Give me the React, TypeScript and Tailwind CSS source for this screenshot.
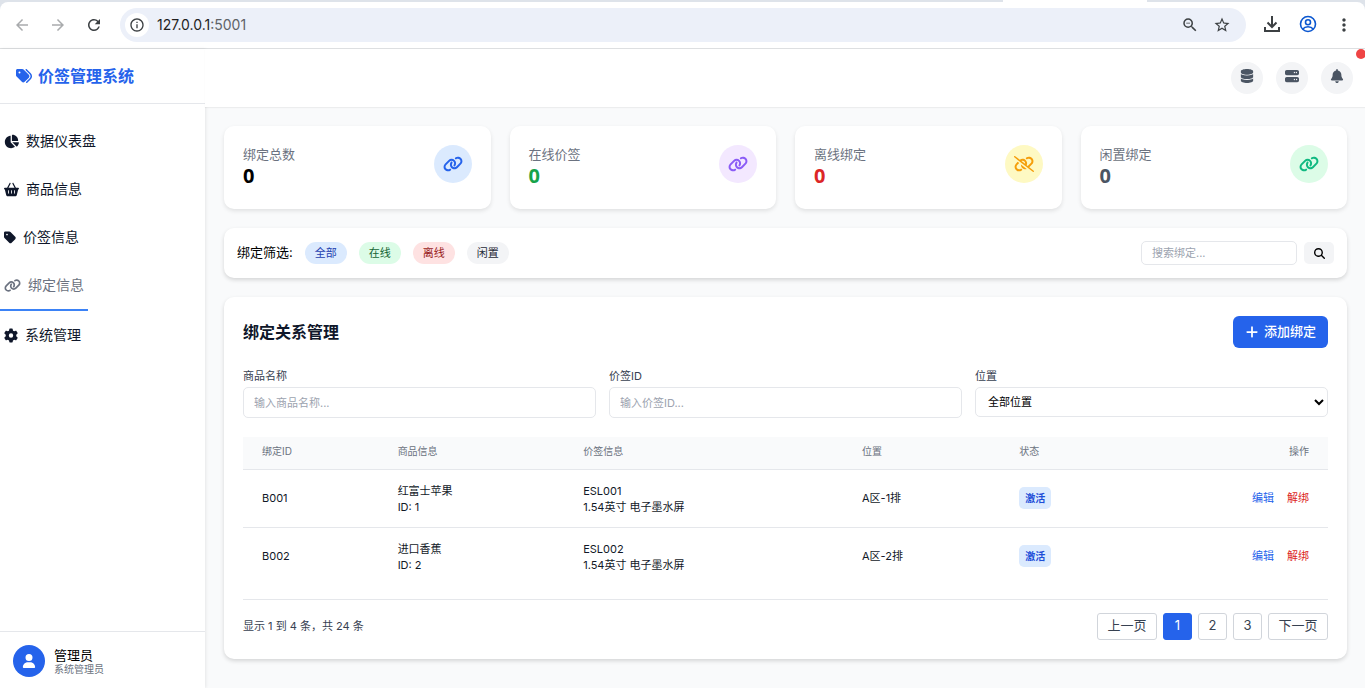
import { useState } from "react";
import type { ReactNode } from "react";
import {
  FaBasketShopping,
  FaBell,
  FaChartPie,
  FaDatabase,
  FaGear,
  FaLink,
  FaLinkSlash,
  FaMagnifyingGlass,
  FaPlus,
  FaServer,
  FaTag,
  FaTags,
  FaUser,
} from "react-icons/fa6";
import { MdArrowBack, MdArrowForward, MdInfoOutline, MdMoreVert, MdRefresh, MdStarBorder, MdZoomOut } from "react-icons/md";
import { clsx } from "clsx";

type Binding = {
  id: string;
  product: string;
  productId: number;
  tag: string;
  tagModel: string;
  location: string;
};

type StatCardProps = {
  label: string;
  value: number;
  valueClass: string;
  iconClass: string;
  icon: ReactNode;
};

const navItems = [
  { label: "数据仪表盘", icon: FaChartPie, iconWidth: "w-[15px]" },
  { label: "商品信息", icon: FaBasketShopping, iconWidth: "w-[15px]" },
  { label: "价签信息", icon: FaTag, iconWidth: "w-3" },
  { label: "绑定信息", icon: FaLink, iconWidth: "w-[17px]" },
  { label: "系统管理", icon: FaGear, iconWidth: "w-[14px]" },
];

const filters = [
  { label: "全部", className: "bg-[#dbeafe] text-[#1e40af]" },
  { label: "在线", className: "bg-[#dcfce7] text-[#166534]" },
  { label: "离线", className: "bg-[#fee2e2] text-[#991b1b]" },
  { label: "闲置", className: "bg-[#f3f4f6] text-[#1f2937]" },
];

const bindings: Binding[] = [
  { id: "B001", product: "红富士苹果", productId: 1, tag: "ESL001", tagModel: "1.54英寸 电子墨水屏", location: "A区-1排" },
  { id: "B002", product: "进口香蕉", productId: 2, tag: "ESL002", tagModel: "1.54英寸 电子墨水屏", location: "A区-2排" },
];

const inputClass = "w-full rounded-[5px] border border-[#e5e7eb] bg-white px-[10px] text-[11px] placeholder:text-[#9ca3af]";

const BrowserBar = () => (
  <div className="border-b border-[#dddfe1] bg-[#dee3ea]">
    <div className="flex h-0.5">
      <div className="w-[1003px]"></div>
      <div className="w-36 bg-white"></div>
    </div>
    <div className="flex h-[46px] items-center rounded-t-lg bg-white pl-3 pr-[11px] text-[#3c4043]">
      <button aria-label="后退" className="mr-4 flex w-5 justify-center text-[#a9abad]">
        <MdArrowBack size={18} />
      </button>
      <button aria-label="前进" className="mr-4 flex w-5 justify-center text-[#a9abad]">
        <MdArrowForward size={18} />
      </button>
      <button aria-label="刷新" className="mr-4 flex w-5 justify-center">
        <MdRefresh size={18} />
      </button>
      <div className="flex h-[34px] flex-1 items-center rounded-full bg-[#ecf0f9] pl-[5px] pr-[14px]">
        <button aria-label="网站信息" className="flex h-6 w-6 items-center justify-center rounded-full bg-white">
          <MdInfoOutline size={16} />
        </button>
        <span className="ml-2 flex-1 text-sm text-[#5f6368]">
          <span className="text-[#1f1f1f]">127.0.0.1</span>:5001
        </span>
        <button aria-label="缩放" className="mr-3 flex w-5 justify-center">
          <MdZoomOut size={18} />
        </button>
        <button aria-label="收藏" className="flex w-5 justify-center">
          <MdStarBorder size={18} />
        </button>
      </div>
      <div className="ml-4 flex gap-4">
        <button aria-label="下载" className="flex w-5 justify-center">
          <svg width="18" height="18" viewBox="0 0 18 18" fill="none" stroke="currentColor" strokeWidth="2">
            <path d="M9 1v11M4.500 7.500L9 12l4.500-4.500M2 12v4h14v-4" />
          </svg>
        </button>
        <button aria-label="用户" className="flex w-5 justify-center text-[#0b57d0]">
          <svg width="18" height="18" viewBox="0 0 18 18" fill="none" stroke="currentColor" strokeWidth="1.600">
            <circle cx="9" cy="9" r="7.500" />
            <circle cx="9" cy="7.200" r="2.500" />
            <path d="M3.600 14.200c1.400-1.700 3.300-2.400 5.400-2.400s4 .7 5.400 2.400" />
          </svg>
        </button>
        <button aria-label="菜单" className="flex w-5 justify-center">
          <MdMoreVert size={20} />
        </button>
      </div>
    </div>
  </div>
);

const Sidebar = () => {
  const [active, setActive] = useState("绑定信息");

  return (
    <aside className="z-10 flex w-[205px] shrink-0 flex-col bg-white shadow-[1px_0_3px_rgba(0,0,0,0.08)]">
      <div className="flex h-[55px] items-center border-b border-[#e5e7eb] pl-4 text-[#2563eb]">
        <FaTags size={16} />
        <h1 className="ml-[6px] text-base font-bold">价签管理系统</h1>
      </div>
      <nav className="flex flex-1 flex-col items-start pt-[13px]">
        {navItems.map(({ label, icon: Icon, iconWidth }) => (
          <a
            key={label}
            href="#"
            onClick={() => setActive(label)}
            className={clsx("flex items-center gap-[7px] px-1 py-3 text-sm leading-6", active === label ? "border-b-2 border-[#3b82f6] text-[#6b7280]" : "text-[#0f172a]")}
          >
            <Icon className={clsx("h-[15px]", iconWidth)} />
            {label}
          </a>
        ))}
      </nav>
      <div className="flex items-center border-t border-[#e5e7eb] pb-[11px] pl-[13px] pt-[13px]">
        <div className="flex h-8 w-8 items-center justify-center rounded-full bg-[#2563eb] text-white">
          <FaUser size={14} />
        </div>
        <div className="ml-[9px]">
          <p className="text-[13px] leading-4">管理员</p>
          <p className="text-[10px] leading-3 text-[#6b7280]">系统管理员</p>
        </div>
      </div>
    </aside>
  );
};

const Header = () => (
  <header className="relative z-20 flex h-[58px] shrink-0 items-center justify-end gap-[13px] overflow-hidden bg-white pr-3 text-[#4b5563] shadow-[0_1px_1px_rgba(0,0,0,0.05)]">
    <button aria-label="数据库" className="flex h-8 w-8 items-center justify-center rounded-full bg-[#f3f4f6] pb-1">
      <FaDatabase size={14} />
    </button>
    <button aria-label="服务器" className="flex h-8 w-8 items-center justify-center rounded-full bg-[#f3f4f6] pb-1">
      <FaServer size={14} />
    </button>
    <button aria-label="通知" className="flex h-8 w-8 items-center justify-center rounded-full bg-[#f3f4f6] pb-1">
      <FaBell size={14} />
    </button>
    <span className="absolute -right-px top-0 h-[10px] w-[10px] rounded-full bg-[#ef4444]"></span>
  </header>
);

const StatCard = ({ label, value, valueClass, iconClass, icon }: StatCardProps) => (
  <div className="flex items-start justify-between rounded-[10px] bg-white px-[19px] pb-[22px] pt-[19px] shadow-[0_2px_4px_rgba(0,0,0,0.1)]">
    <div>
      <p className="text-[13px] leading-[19px] text-[#6b7280]">{label}</p>
      <p className={clsx("font-['Noto_Sans',sans-serif] text-[20px] font-bold leading-[23px]", valueClass)}>{value}</p>
    </div>
    <div className={clsx("flex h-[38px] w-[38px] items-center justify-center rounded-full", iconClass)}>{icon}</div>
  </div>
);

const FilterBar = () => (
  <div className="flex items-center justify-between rounded-[10px] bg-white px-[13px] py-[13px] shadow-[0_2px_4px_rgba(0,0,0,0.15)]">
    <div className="flex items-center gap-3">
      <span className="text-[13px]">绑定筛选:</span>
      {filters.map((filter) => (
        <button key={filter.label} className={clsx("h-[22px] rounded-full px-[10px] text-[11px]", filter.className)}>
          {filter.label}
        </button>
      ))}
    </div>
    <div className="flex items-center gap-[7px]">
      <input type="text" aria-label="搜索绑定" placeholder="搜索绑定..." className="h-6 w-[156px] rounded-[5px] border border-[#e5e7eb] px-[10px] text-[11px] placeholder:text-[#9ca3af]" />
      <button aria-label="搜索" className="flex h-[22px] w-[30px] items-center justify-center rounded-[5px] bg-[#f3f4f6]">
        <FaMagnifyingGlass size={11} />
      </button>
    </div>
  </div>
);

const BindingTable = () => (
  <table className="mt-[19px] w-full table-fixed text-left text-[11px] leading-4 text-[#111827]">
    <colgroup>
      <col className="w-[12.5%]" />
      <col className="w-[17.1%]" />
      <col className="w-[25.7%]" />
      <col className="w-[14.5%]" />
      <col />
      <col />
    </colgroup>
    <thead className="border-b border-[#e5e7eb] bg-[#f9fafb] text-[10px] text-[#6b7280]">
      <tr className="h-8">
        <th className="px-[19px] pb-1 font-normal">绑定ID</th>
        <th className="px-[19px] pb-1 font-normal">商品信息</th>
        <th className="px-[19px] pb-1 font-normal">价签信息</th>
        <th className="px-[19px] pb-1 font-normal">位置</th>
        <th className="px-[19px] pb-1 font-normal">状态</th>
        <th className="px-[19px] pb-1 text-right font-normal">操作</th>
      </tr>
    </thead>
    <tbody className="divide-y divide-[#e5e7eb]">
      {bindings.map((binding) => (
        <tr key={binding.id}>
          <td className="px-[19px]">{binding.id}</td>
          <td className="px-[19px] pb-3 pt-[13px]">
            <div>{binding.product}</div>
            <div>ID: {binding.productId}</div>
          </td>
          <td className="px-[19px] pb-3 pt-[13px]">
            <div>{binding.tag}</div>
            <div>{binding.tagModel}</div>
          </td>
          <td className="px-[19px]">{binding.location}</td>
          <td className="px-[19px]">
            <span className="inline-flex h-[22px] items-center rounded-[5px] bg-[#dbeafe] px-[6px] align-middle text-[10px] font-bold text-[#1d4ed8]">激活</span>
          </td>
          <td className="px-[19px]">
            <div className="flex justify-end gap-[13px]">
              <button className="text-[#2563eb]">编辑</button>
              <button className="text-[#dc2626]">解绑</button>
            </div>
          </td>
        </tr>
      ))}
    </tbody>
  </table>
);

const Pagination = () => {
  const [page, setPage] = useState(1);
  const buttonClass = "h-[27px] rounded-[3px] border text-[13px]";

  return (
    <div className="mt-[14px] flex items-center justify-between border-t border-[#e5e7eb] pt-[13px]">
      <p className="text-[11px] text-[#374151]">显示 1 到 4 条，共 24 条</p>
      <div className="flex gap-[6px]">
        <button className={clsx(buttonClass, "w-[60px] border-[#d1d5db] text-[#374151]")} onClick={() => setPage(Math.max(1, page - 1))}>
          上一页
        </button>
        {[1, 2, 3].map((n) => (
          <button key={n} onClick={() => setPage(n)} className={clsx(buttonClass, "w-[29px]", n === page ? "border-[#2563eb] bg-[#2563eb] text-white" : "border-[#d1d5db] text-[#374151]")}>
            {n}
          </button>
        ))}
        <button className={clsx(buttonClass, "w-[60px] border-[#d1d5db] text-[#374151]")} onClick={() => setPage(Math.min(3, page + 1))}>
          下一页
        </button>
      </div>
    </div>
  );
};

const BindingPanel = () => (
  <section className="rounded-[10px] bg-white p-[19px] shadow-[0_2px_4px_rgba(0,0,0,0.15)]">
    <div className="flex items-center justify-between">
      <h2 className="text-base font-bold text-[#0f172a]">绑定关系管理</h2>
      <button className="flex h-8 items-center gap-[5px] rounded-md bg-[#2563eb] px-3 text-[13px] font-medium text-white">
        <FaPlus size={14} />
        添加绑定
      </button>
    </div>
    <div className="mt-5 grid grid-cols-3 gap-[13px]">
      <div>
        <label htmlFor="product" className="mb-[3px] block text-[11px] leading-4 text-[#374151]">
          商品名称
        </label>
        <input id="product" type="text" placeholder="输入商品名称..." className={clsx(inputClass, "h-[31px]")} />
      </div>
      <div>
        <label htmlFor="tag" className="mb-[3px] block text-[11px] leading-4 text-[#374151]">
          价签ID
        </label>
        <input id="tag" type="text" placeholder="输入价签ID..." className={clsx(inputClass, "h-[31px]")} />
      </div>
      <div>
        <label htmlFor="location" className="mb-[3px] block text-[11px] leading-4 text-[#374151]">
          位置
        </label>
        <select id="location" className="h-[30px] w-full rounded-[5px] border border-[#e5e7eb] bg-white pl-2 text-[11px] text-black">
          <option>全部位置</option>
          <option>A区-1排</option>
          <option>A区-2排</option>
        </select>
      </div>
    </div>
    <BindingTable />
    <Pagination />
  </section>
);

const App = () => (
  <div className="flex min-h-screen flex-col bg-[#f9fafb] font-['Inter','Noto_Sans_CJK_SC',sans-serif] text-black">
    <BrowserBar />
    <div className="flex flex-1">
      <Sidebar />
      <div className="flex min-w-0 flex-1 flex-col">
        <Header />
        <main className="flex flex-col gap-[19px] py-[19px] pl-[19px] pr-[18px]">
          <div className="grid grid-cols-4 gap-[19px]">
            <StatCard label="绑定总数" value={0} valueClass="text-black" iconClass="bg-[#dbeafe] text-[#2563eb]" icon={<FaLink size={20} />} />
            <StatCard label="在线价签" value={0} valueClass="text-[#16a34a]" iconClass="bg-[#f3e8ff] text-[#8b5cf6]" icon={<FaLink size={20} />} />
            <StatCard label="离线绑定" value={0} valueClass="text-[#dc2626]" iconClass="bg-[#fef9c3] text-[#f59e0b]" icon={<FaLinkSlash size={20} />} />
            <StatCard label="闲置绑定" value={0} valueClass="text-[#4b5563]" iconClass="bg-[#dcfce7] text-[#10b981]" icon={<FaLink size={20} />} />
          </div>
          <FilterBar />
          <BindingPanel />
        </main>
      </div>
    </div>
  </div>
);

export default App;
